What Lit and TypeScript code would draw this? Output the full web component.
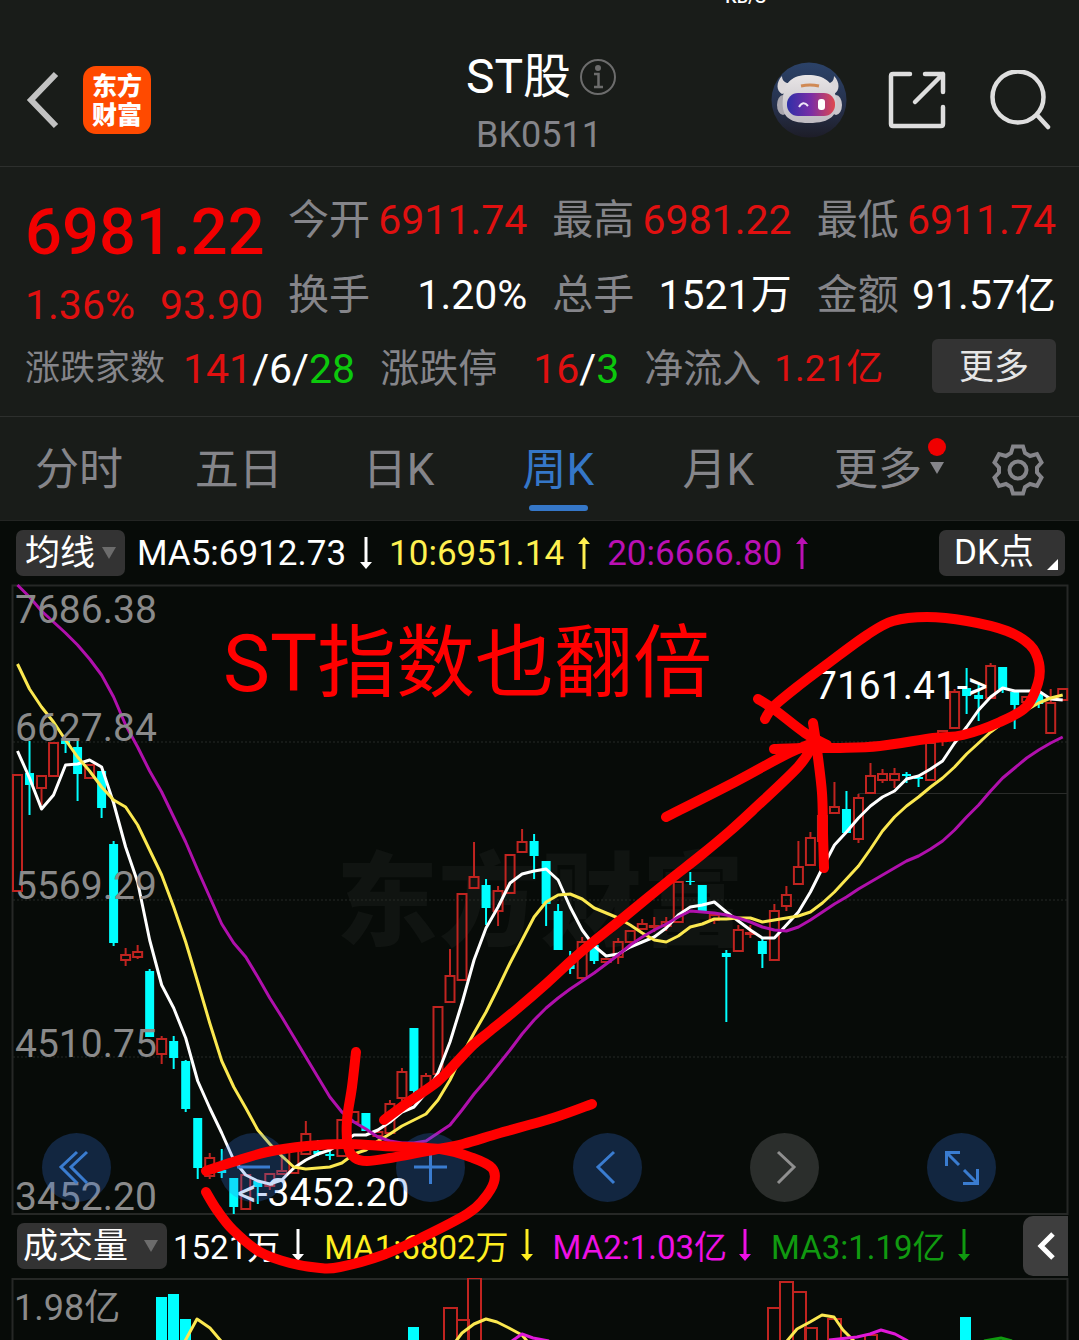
import { LitElement, html, svg, css } from "lit";
import { customElement, property } from "lit/decorators.js";
import { classMap } from "lit/directives/class-map.js";

type Candle = [up: 0 | 1, high: number, top: number, bottom: number, low: number];
type Point = [number, number];

const STEP = 12.014;
const FIRST = 17.5;
const xAt = (i: number) => FIRST + STEP * i;

const CANDLES: Candle[] = [
  [1, 774, 774, 892, 892], [0, 741, 773, 785, 815], [1, 775, 775, 789, 805], [1, 742, 742, 777, 777],
  [0, 740, 740, 744, 753], [0, 741, 747, 774, 801], [1, 764, 764, 779, 779], [0, 771, 771, 808, 818],
  [0, 841, 844, 943, 946], [1, 948, 954, 961, 966], [1, 945, 951, 958, 959], [0, 969, 971, 1037, 1037],
  [1, 1036, 1038, 1055, 1064], [0, 1036, 1041, 1058, 1069], [0, 1060, 1061, 1109, 1112], [0, 1118, 1118, 1168, 1179],
  [1, 1153, 1157, 1177, 1179], [0, 1149, 1170, 1173, 1178], [0, 1178, 1178, 1207, 1214], [1, 1174, 1174, 1210, 1210],
  [0, 1181, 1181, 1187, 1204], [1, 1173, 1173, 1187, 1190], [1, 1155, 1170, 1175, 1175], [1, 1150, 1150, 1174, 1174],
  [1, 1121, 1133, 1155, 1155], [0, 1140, 1151, 1154, 1156], [0, 1150, 1154, 1156, 1160], [1, 1119, 1119, 1157, 1157],
  [1, 1111, 1111, 1123, 1123], [0, 1113, 1113, 1131, 1131], [1, 1131, 1131, 1137, 1137], [1, 1100, 1103, 1134, 1134],
  [1, 1068, 1071, 1099, 1101], [0, 1028, 1028, 1091, 1094], [1, 1073, 1075, 1091, 1091], [1, 1006, 1006, 1075, 1075],
  [1, 949, 975, 1003, 1003], [1, 893, 893, 981, 981], [1, 842, 876, 889, 889], [0, 879, 885, 908, 925],
  [1, 886, 890, 912, 926], [1, 854, 854, 894, 894], [1, 829, 841, 853, 853], [0, 834, 841, 856, 879],
  [0, 861, 861, 904, 926], [0, 904, 911, 950, 950], [0, 951, 965, 969, 974], [1, 937, 941, 979, 982],
  [0, 945, 945, 961, 964], [1, 958, 958, 963, 963], [1, 938, 941, 958, 964], [1, 930, 930, 943, 943],
  [1, 919, 923, 930, 930], [1, 917, 925, 927, 932], [1, 917, 921, 927, 931], [1, 881, 881, 923, 923],
  [0, 872, 881, 882, 885], [0, 885, 885, 911, 913], [1, 914, 914, 921, 924], [0, 950, 953, 957, 1022],
  [1, 925, 929, 952, 952], [1, 925, 932, 934, 938], [0, 939, 941, 954, 968], [1, 904, 910, 961, 961],
  [1, 886, 894, 907, 911], [1, 841, 866, 885, 885], [1, 832, 837, 866, 866], [1, 815, 815, 842, 842],
  [1, 782, 806, 814, 814], [0, 791, 809, 833, 833], [1, 794, 797, 840, 843], [1, 763, 775, 794, 794],
  [1, 769, 773, 781, 783], [1, 768, 773, 781, 788], [0, 772, 774, 776, 783], [0, 777, 777, 779, 787],
  [1, 742, 742, 781, 781], [1, 730, 730, 738, 746], [1, 689, 691, 729, 729], [0, 668, 688, 696, 714],
  [0, 685, 695, 699, 721], [1, 663, 665, 699, 699], [0, 667, 667, 689, 693], [0, 692, 692, 705, 729],
  [1, 696, 696, 703, 703], [0, 693, 693, 704, 708], [1, 689, 702, 734, 734], [1, 688, 688, 701, 701],
];

const MA5 = [
  751, 778, 809, 795, 765, 764, 760, 767, 803, 847, 882, 940, 985, 1008, 1038, 1081, 1108, 1133, 1160, 1175, 1181, 1184,
  1180, 1168, 1160, 1154, 1150, 1143, 1135, 1135, 1130, 1122, 1112, 1107, 1093, 1073, 1042, 1003, 960, 928, 907, 883,
  874, 871, 869, 880, 907, 930, 946, 956, 954, 947, 942, 937, 928, 915, 907, 905, 902, 912, 921, 930, 938, 938, 925, 912,
  892, 868, 845, 832, 818, 806, 797, 791, 779, 776, 769, 761, 743, 727, 710, 697, 688, 691, 691, 691, 699, 700,
];
const MA10 = [
  664, 689, 707, 722, 740, 757, 771, 787, 800, 807, 825, 850, 875, 907, 942, 982, 1023, 1061, 1087, 1108, 1130, 1144,
  1156, 1167, 1169, 1168, 1167, 1163, 1154, 1150, 1141, 1134, 1126, 1120, 1114, 1100, 1080, 1055, 1033, 1012, 988, 963,
  940, 917, 902, 895, 894, 899, 908, 913, 918, 925, 933, 940, 942, 936, 927, 924, 919, 919, 918, 918, 922, 920, 918, 916,
  912, 903, 892, 879, 866, 849, 831, 817, 806, 797, 787, 778, 767, 754, 743, 732, 723, 717, 710, 703, 698, 695,
];
const MA20 = [
  585, 597, 611, 622, 633, 645, 659, 675, 697, 725, 747, 771, 792, 817, 842, 870, 897, 924, 943, 957, 977, 998, 1017,
  1037, 1057, 1077, 1097, 1112, 1122, 1129, 1137, 1141, 1143, 1143, 1141, 1133, 1125, 1110, 1094, 1080, 1065, 1050, 1034,
  1020, 1008, 998, 989, 981, 973, 964, 955, 945, 937, 930, 924, 917, 911, 912, 913, 915, 918, 922, 927, 930, 931, 927,
  920, 912, 904, 897, 889, 882, 875, 868, 861, 856, 849, 841, 830, 817, 805, 791, 778, 768, 758, 750, 743, 737,
];

const VOLUME_BARS: [up: 0 | 1, x: number, width: number, top: number][] = [
  [0, 156, 11, 1297], [0, 168, 11, 1294], [0, 180, 11, 1319], [0, 408, 11, 1327],
  [1, 443, 13, 1308], [1, 456, 12, 1320], [1, 467, 13, 1278],
  [1, 767, 12, 1308], [1, 779, 13, 1282], [1, 792, 13, 1292], [1, 804, 12, 1328], [1, 827, 13, 1319], [1, 864, 12, 1335],
  [0, 960, 11, 1317],
];

const VOLUME_LINES: { tone: string; points: string }[] = [
  { tone: "line-y", points: "185,1341 197,1319 210,1328 221,1341" },
  { tone: "line-y", points: "456,1341 462,1333 474,1324 486,1319 497,1322 509,1328 522,1335 527,1341" },
  { tone: "line-y", points: "787,1341 797,1329 810,1322 822,1315 834,1317 843,1330 854,1341" },
  { tone: "line-m", points: "512,1341 522,1334 533,1338 549,1341" },
  { tone: "line-m", points: "829,1340 857,1337 870,1334 881,1330 895,1334 908,1341" },
  { tone: "line-g", points: "984,1341 1001,1338 1012,1341" },
];

const MARKER_STROKES: Point[][] = [
  [[765, 719], [773, 707], [797, 687], [830, 662], [867, 635], [893, 621], [927, 617], [967, 621], [1007, 631], [1030, 645],
   [1039, 663], [1038, 683], [1026, 707], [1000, 722], [963, 735], [933, 738], [880, 746], [840, 748], [807, 748], [774, 749]],
  [[758, 699], [775, 710], [805, 733], [827, 745]],
  [[813, 723], [817, 750], [822, 793], [823, 833], [824, 868]],
  [[666, 817], [735, 782], [785, 755], [815, 742]],
  [[384, 1120], [407, 1103], [437, 1082], [453, 1066], [473, 1045], [490, 1031], [517, 1009], [547, 983], [573, 959],
   [593, 942], [623, 918], [667, 882], [700, 856], [730, 831], [753, 810], [798, 767], [813, 745]],
  [[356, 1052], [352, 1087], [347, 1120], [348, 1147], [355, 1158], [367, 1161], [390, 1158], [433, 1150], [463, 1144],
   [500, 1133], [553, 1118], [592, 1104]],
  [[206, 1171], [233, 1162], [267, 1152], [307, 1146], [345, 1144], [383, 1146], [440, 1149], [473, 1158], [492, 1168],
   [494, 1182], [483, 1200], [467, 1214], [423, 1237], [383, 1255], [340, 1267], [320, 1268], [290, 1263], [260, 1252],
   [233, 1230], [217, 1210], [206, 1192]],
];

/** Turns a list of points into a smooth Catmull-Rom path. */
function smooth(points: Point[]): string {
  let d = `M${points[0][0]} ${points[0][1]}`;
  for (let i = 0; i < points.length - 1; i++) {
    const a = points[i - 1] ?? points[i];
    const b = points[i];
    const c = points[i + 1];
    const e = points[i + 2] ?? c;
    d += `C${b[0] + (c[0] - a[0]) / 6} ${b[1] + (c[1] - a[1]) / 6} ${c[0] - (e[0] - b[0]) / 6} ${c[1] - (e[1] - b[1]) / 6} ${c[0]} ${c[1]}`;
  }
  return d;
}

const linePoints = (values: number[]) => values.map((y, i) => `${xAt(i)},${y}`).join(" ");

const arrow = (direction: "up" | "down") => html`
  <svg class="arrow" viewBox="0 0 12 34" width="12" height="34" aria-hidden="true">
    ${direction === "down"
      ? svg`<path d="M6 1V28" stroke="currentColor" stroke-width="3"/><path d="M0 26H12L6 33Z" fill="currentColor"/>`
      : svg`<path d="M6 6V33" stroke="currentColor" stroke-width="3"/><path d="M0 8H12L6 1Z" fill="currentColor"/>`}
  </svg>`;

@customElement("quote-header")
class QuoteHeader extends LitElement {
  static styles = css`
    :host { display: block; border-bottom: 1px solid #2d2f2d; }
    .bar { display: grid; grid-template-columns: 1fr auto 1fr; align-items: center; height: 132px; padding: 30px 28px 0 26px; }
    .side { display: flex; align-items: center; }
    .left { gap: 23px; }
    .right { justify-content: flex-end; gap: 40px; }
    button, a { display: block; padding: 0; border: 0; background: none; }
    svg { display: block; }
    .logo { width: 68px; height: 68px; border-radius: 13px; background: #ff4a00; color: #fff; box-sizing: border-box;
      padding-top: 4px; font: 900 25px/29px "Noto Sans CJK SC", sans-serif; text-align: center; text-decoration: none; }
    .logo span { display: block; }
    .title { padding: 11px 0 0 6px; text-align: center; }
    h1 { display: flex; align-items: center; gap: 8px; margin: 0; font-size: 48px; font-weight: 400; line-height: 58px; color: #fff; }
    .code { margin: 0; padding-right: 5px; font-size: 36px; line-height: 58px; color: #85858a; }
  `;
  render() {
    return html`
      <header class="bar">
        <div class="side left">
          <button aria-label="返回">
            <svg width="34" height="60" viewBox="0 0 34 60"><path d="M30 4L5 30L30 56" fill="none" stroke="#c2c2c2" stroke-width="6"/></svg>
          </button>
          <a class="logo" href="#home"><span>东方</span><span>财富</span></a>
        </div>
        <div class="title">
          <h1>ST股
            <svg width="38" height="38" viewBox="0 0 38 38" fill="none" stroke="#6c6c6c" stroke-width="2">
              <circle cx="19" cy="19" r="17"/><circle cx="19" cy="10" r="2" fill="#6c6c6c"/>
              <path d="M15 16H19.500V29M15 29H24" stroke-width="2.500"/>
            </svg>
          </h1>
          <p class="code">BK0511</p>
        </div>
        <div class="side right">
          <button aria-label="助手">
            <svg width="76" height="76" viewBox="0 0 76 76">
              <defs>
                <linearGradient id="sky" x1="0" y1="0" x2="0" y2="1"><stop offset="0" stop-color="#2b4268"/><stop offset=".6" stop-color="#26304a"/><stop offset="1" stop-color="#1d1d28"/></linearGradient>
                <linearGradient id="visor" x1="0" y1="0" x2="1" y2="0"><stop offset="0" stop-color="#2f2fa8"/><stop offset=".5" stop-color="#7a2ea6"/><stop offset="1" stop-color="#e0484e"/></linearGradient>
                <linearGradient id="shell" x1="0" y1="0" x2="0" y2="1"><stop offset="0" stop-color="#e8e5e6"/><stop offset="1" stop-color="#bfbbc2"/></linearGradient>
              </defs>
              <circle cx="38" cy="38" r="37.500" fill="url(#sky)"/>
              <path d="M11 14C5 20 5 29 11 32L24 27L20 21C15 22 11 19 11 14Z M63 14C69 20 69 29 63 32L52 27L55 21C60 22 63 19 63 14Z" fill="#dcd8da"/>
              <ellipse cx="12" cy="43" rx="6" ry="10" fill="#a9a6ae"/><ellipse cx="65" cy="43" rx="6" ry="10" fill="#cbc7cc"/>
              <path d="M12 36C13 20 22 13 37 13C53 13 63 20 65 36C68 53 60 61 38 61C16 61 10 53 12 36Z" fill="url(#shell)"/>
              <path d="M30 24Q39 22 48 24" stroke="#d08a55" stroke-width="3" fill="none"/>
              <rect x="16" y="31" width="48" height="23" rx="11" fill="url(#visor)"/>
              <path d="M28 45Q32 38 37 44" stroke="#efe6f7" stroke-width="2" fill="none"/>
              <rect x="47" y="37" width="7" height="11" rx="3" fill="#fff"/>
            </svg>
          </button>
          <button aria-label="分享">
            <svg width="60" height="60" viewBox="0 0 60 60" fill="none" stroke="#dedede" stroke-width="4.500" stroke-linecap="round" stroke-linejoin="round">
              <path d="M23 4H6Q4 4 4 6V54Q4 56 6 56H54Q56 56 56 54V37"/><path d="M38 4H56V22M56 4L28 32"/>
            </svg>
          </button>
          <button aria-label="搜索">
            <svg width="64" height="60" viewBox="0 0 64 60" fill="none" stroke="#dedede" stroke-width="4.500" stroke-linecap="round">
              <circle cx="31" cy="27" r="25.500"/><path d="M50 45L61 57"/>
            </svg>
          </button>
        </div>
      </header>`;
  }
}

@customElement("quote-summary")
class QuoteSummary extends LitElement {
  static styles = css`
    :host { display: block; border-bottom: 1px solid #2d2f2d; padding: 16px 23px 20px 25px; }
    .top { display: grid; grid-template-columns: 238px 1fr 1fr 1fr; column-gap: 25px; }
    .main { display: flex; flex-direction: column; }
    .price { font-size: 65px; font-weight: 500; line-height: 84px; padding-top: 7px; color: #f20000; }
    .change { display: flex; justify-content: space-between; line-height: 62px; }
    .cell { display: flex; justify-content: space-between; line-height: 75px; white-space: nowrap; }
    .col { display: flex; flex-direction: column; }
    .top, .bottom { font-size: 41px; }
    .label { color: #85858a; }
    .up { color: #e01010; }
    .flat { color: #fff; }
    .down { color: #0cc80c; }
    .bottom { display: flex; align-items: center; height: 60px; gap: 25px; line-height: 60px; white-space: nowrap; }
    .pair { display: flex; align-items: center; gap: 18px; padding-top: 6px; }
    .pair.wide { gap: 36px; }
    .pair.tight { gap: 13px; }
    .s { font-size: 35px; }
    .m { font-size: 39px; }
    .v { font-size: 37px; }
    .more { margin-left: auto; width: 124px; height: 54px; padding: 3px 0 0; border: 0; border-radius: 6px; background: #333; color: #e6e6e6;
      font: inherit; font-size: 35px; line-height: 50px; }
  `;
  private columns = [
    [["今开", "6911.74", "up"], ["换手", "1.20%", "flat"]],
    [["最高", "6981.22", "up"], ["总手", "1521万", "flat"]],
    [["最低", "6911.74", "up"], ["金额", "91.57亿", "flat"]],
  ];
  render() {
    return html`
      <section>
        <div class="top">
          <div class="main">
            <strong class="price">6981.22</strong>
            <div class="change up"><span>1.36%</span><span>93.90</span></div>
          </div>
          ${this.columns.map((col) => html`<div class="col">
            ${col.map(([label, value, tone]) => html`<div class="cell"><span class="label">${label}</span><span class=${tone}>${value}</span></div>`)}
          </div>`)}
        </div>
        <div class="bottom">
          <div class="pair"><span class="label s">涨跌家数</span><span><span class="up">141</span><span class="flat">/6/</span><span class="down">28</span></span></div>
          <div class="pair wide"><span class="label m">涨跌停</span><span><span class="up">16</span><span class="flat">/</span><span class="down">3</span></span></div>
          <div class="pair tight"><span class="label m">净流入</span><span class="up v">1.21亿</span></div>
          <button class="more">更多</button>
        </div>
      </section>`;
  }
}

@customElement("period-tabs")
class PeriodTabs extends LitElement {
  @property() active = "周K";
  static styles = css`
    :host { display: block; border-bottom: 1px solid #232523; }
    nav { display: grid; grid-template-columns: repeat(6, 1fr) 120px; height: 103px; }
    button { display: flex; flex-direction: column; align-items: center; justify-content: center; padding: 3px 2px 0 0; border: 0; background: none;
      color: #85858a; font: inherit; font-size: 44px; line-height: 60px; }
    .label { position: relative; }
    .on { color: #3577c8; }
    .on .label::after { content: ""; position: absolute; left: 6px; right: 6px; bottom: -11px; height: 6px; border-radius: 3px; background: #3577c8; }
    .badge { position: absolute; left: 94px; top: -2px; width: 18px; }
    svg { display: block; }
  `;
  render() {
    return html`
      <nav>
        ${["分时", "五日", "日K", "周K", "月K", "更多"].map((name) => html`
          <button class=${classMap({ on: name === this.active })}>
            <span class="label">${name}${name === "更多"
              ? html`<svg class="badge" width="18" height="38" viewBox="0 0 18 38"><circle cx="9" cy="9" r="9" fill="#f00000"/><path d="M2 24H16L9 36Z" fill="#85858a"/></svg>`
              : ""}</span>
          </button>`)}
        <button aria-label="设置">
          <svg width="52" height="52" viewBox="0 0 52 52" fill="none" stroke="#85858a" stroke-width="4">
            <path d="M21 2.500H31L33 9L38 12L45 10L49.500 18.500L45 23.500V28.500L49.500 33.500L45 42L38 40L33 43L31 49.500H21L19 43L14 40L7 42L2.500 33.500L7 28.500V23.500L2.500 18.500L7 10L14 12L19 9Z"/>
            <circle cx="26" cy="26" r="8.500"/>
          </svg>
        </button>
      </nav>`;
  }
}

@customElement("chart-panel")
class ChartPanel extends LitElement {
  static styles = css`
    :host { display: block; position: relative; background: #070b08; }
    svg { display: block; }
    .legend { display: flex; align-items: center; height: 64px; box-sizing: border-box; color: #fff; white-space: nowrap; }
    .price-legend { padding: 0 14px 0 16px; font-size: 35px; gap: 17px; }
    .volume-legend { padding: 0 11px 0 17px; font-size: 33px; gap: 20px; }
    .item { display: flex; align-items: center; gap: 14px; }
    .volume-legend .item { gap: 12px; padding-bottom: 3px; }
    .first { margin-left: -5px; }
    .volume-legend .first { margin-left: -14px; }
    .yellow { color: #fff050; }
    .purple { color: #ba10b4; }
    .bright { color: #ffee20; }
    .magenta { color: #ee10e4; }
    .green { color: #109a10; }
    .pick { position: relative; display: block; }
    .pick svg { position: absolute; right: 9px; top: 17px; pointer-events: none; }
    select { display: block; appearance: none; height: 46px; margin: 0; padding: 2px 29px 0 9px; border: 0; border-radius: 7px; background: #333;
      color: #fff; font: inherit; font-size: 35px; line-height: 44px; }
    .volume-legend select { padding: 2px 38px 0 6px; }
    .dk { position: relative; margin-left: auto; height: 46px; padding: 0 31px 0 15px; border: 0; border-radius: 7px; background: #333; color: #fff;
      font: inherit; font-size: 35px; line-height: 46px; }
    .dk svg { position: absolute; right: 7px; bottom: 6px; }
    .fold { display: flex; align-items: center; justify-content: center; margin-left: auto; width: 45px; height: 60px; padding: 0; border: 0;
      border-radius: 10px 0 0 10px; background: #3e3e3e; }
    .stage { position: relative; }
    .plot { width: 100%; height: auto; overflow: hidden; }
    .stage .plot { overflow: visible; }
    .tools { position: absolute; left: 0; right: 0; bottom: 12px; display: flex; justify-content: space-between; padding: 0 83px 0 42px; }
    .tools button { width: 69px; height: 69px; padding: 0; border: 0; border-radius: 50%; background: rgba(50, 120, 230, 0.25); }
    .tools button:disabled { background: rgba(150, 150, 150, 0.25); }
    .tools path { fill: none; stroke: #3a7cd0; stroke-width: 3; }
    .tools button:disabled path { stroke: #909090; }
    .frame { fill: none; stroke: #262826; stroke-width: 2; }
    .dots { stroke: #262a27; stroke-width: 1; stroke-dasharray: 2 2; }
    .rule { stroke: #2a2c2a; stroke-width: 1; }
    .watermark { fill: #101411; font: 900 102px "Noto Sans CJK SC", sans-serif; }
    .rise { fill: none; stroke: #c02420; stroke-width: 2; }
    .fall { fill: #00ffff; stroke: #00ffff; stroke-width: 0; }
    .fall-wick { stroke: #00ffff; stroke-width: 2; }
    .rise-wick { stroke: #c02420; stroke-width: 2; }
    .line { fill: none; stroke-width: 3; stroke-linejoin: round; }
    .line-w { stroke: #fff; }
    .line-y { stroke: #fbe850; }
    .line-p { stroke: #b010ac; }
    .line-m { stroke: #e018d8; }
    .line-g { stroke: #109a10; }
    .axis { fill: #8a8a8a; font-size: 39px; }
    .axis-s { fill: #8a8a8a; font-size: 36px; }
    .extreme { fill: #fff; font-size: 39px; }
    .marker { position: absolute; left: 0; top: 0; width: 100%; height: 100%; pointer-events: none; }
    .marker path { fill: none; stroke: #ff0000; stroke-width: 10; stroke-linecap: round; stroke-linejoin: round; }
    .marker text { fill: #ff0000; font-size: 79px; }
  `;

  private candle([up, high, top, bottom, low]: Candle, i: number) {
    const x = xAt(i);
    if (up) {
      return svg`<g><path class="rise-wick" d=${`M${x} ${high}V${top}M${x} ${bottom}V${low}`}/>
        <rect class="rise" x=${x - 4.5} y=${top + 1} width="9" height=${Math.max(bottom - top - 2, 1)}/></g>`;
    }
    return svg`<g><path class="fall-wick" d=${`M${x} ${high}V${low}`}/>
      <rect class="fall" x=${x - 4.5} y=${top} width="9" height=${bottom - top}/></g>`;
  }

  private pick(label: string, name: string) {
    return html`<span class="pick">
      <select aria-label=${label}><option>${name}</option></select>
      <svg width="14" height="12" viewBox="0 0 14 12"><path d="M0 0H14L7 12Z" fill="#6c6c6c"/></svg>
    </span>`;
  }

  render() {
    const tools: [string, string, boolean][] = [
      ["最左", "M35 19L19 34L35 50M45 19L29 34L45 50", false],
      ["缩小", "M18 34H51", false],
      ["放大", "M18 34H51M34.500 18V51", false],
      ["左移", "M41 19L25 34L41 50", false],
      ["右移", "M28 19L44 34L28 50", true],
      ["全屏", "M19.500 33V19.500H33M20 20L32 32M50.500 36V50.500H36M50 50L37 37", false],
    ];
    return html`
      <div class="legend price-legend">
        ${this.pick("指标", "均线")}
        <span class="item first">MA5:6912.73 ${arrow("down")}</span>
        <span class="item yellow">10:6951.14 ${arrow("up")}</span>
        <span class="item purple">20:6666.80 ${arrow("up")}</span>
        <button class="dk">DK点<svg width="11" height="11" viewBox="0 0 11 11"><path d="M11 0V11H0Z" fill="#fff"/></svg></button>
      </div>
      <div class="stage">
        <svg class="plot" viewBox="0 585 1079 629" role="img" aria-label="周K线">
          <text class="watermark" x="336" y="938">东方财富</text>
          <path class="dots" d="M13 742H1067M13 900H1067M13 1057H1067"/>
          <path class="rule" d="M858 793.500H1067"/>
          <rect class="frame" x="12.500" y="585.500" width="1055" height="628.500"/>
          ${CANDLES.map((c, i) => this.candle(c, i))}
          <polyline class="line line-w" points=${linePoints(MA5)}/>
          <polyline class="line line-y" points=${linePoints(MA10)}/>
          <polyline class="line line-p" points=${linePoints(MA20)}/>
          <text class="axis" x="15" y="623">7686.38</text>
          <text class="axis" x="15" y="741">6627.84</text>
          <text class="axis" x="15" y="899">5569.29</text>
          <text class="axis" x="15" y="1057">4510.75</text>
          <text class="axis" x="15" y="1210">3452.20</text>
          <text class="extreme" x="815" y="699">7161.41-&gt;</text>
          <text class="extreme" x="237" y="1206">&lt;-3452.20</text>
        </svg>
        <div class="tools">
          ${tools.map(([label, d, off]) => html`<button aria-label=${label} ?disabled=${off}>
            <svg width="69" height="69" viewBox="0 0 69 69"><path d=${d}/></svg></button>`)}
        </div>
      </div>
      <div class="legend volume-legend">
        ${this.pick("副图指标", "成交量")}
        <span class="item first">1521万 ${arrow("down")}</span>
        <span class="item bright">MA1:6802万 ${arrow("down")}</span>
        <span class="item magenta">MA2:1.03亿 ${arrow("down")}</span>
        <span class="item green">MA3:1.19亿 ${arrow("down")}</span>
        <button class="fold" aria-label="展开"><svg width="20" height="32" viewBox="0 0 20 32"><path d="M17 4L5 16L17 28" fill="none" stroke="#fff" stroke-width="5"/></svg></button>
      </div>
      <svg class="plot" viewBox="0 1278 1079 62" role="img" aria-label="成交量">
        <path class="frame" d="M12.500 1340V1279H1067.500V1340"/>
        ${VOLUME_BARS.map(([up, x, w, top]) => svg`<rect class=${up ? "rise" : "fall"} x=${up ? x + 1 : x} y=${top} width=${w} height="80"/>`)}
        ${VOLUME_LINES.map((l) => svg`<polyline class=${`line ${l.tone}`} points=${l.points}/>`)}
        <text class="axis-s" x="14" y="1320">1.98亿</text>
      </svg>
      <svg class="marker" viewBox="0 521 1079 819" preserveAspectRatio="xMidYMin meet">
        <text x="223" y="691">ST指数也翻倍</text>
        ${MARKER_STROKES.map((s) => svg`<path d=${smooth(s)}/>`)}
      </svg>`;
  }
}

@customElement("app-root")
class AppRoot extends LitElement {
  static styles = css`
    :host { display: block; overflow: hidden; background: #191c19; font-family: Roboto, "Noto Sans CJK SC", sans-serif; }
    .status { display: flex; align-items: flex-end; justify-content: flex-end; height: 4px; overflow: hidden; padding-right: 313px;
      color: #fff; font-size: 18px; font-weight: 500; line-height: 14px; }
  `;
  render() {
    return html`
      <div class="status">KB/S</div>
      <quote-header></quote-header>
      <quote-summary></quote-summary>
      <period-tabs></period-tabs>
      <chart-panel></chart-panel>`;
  }
}
